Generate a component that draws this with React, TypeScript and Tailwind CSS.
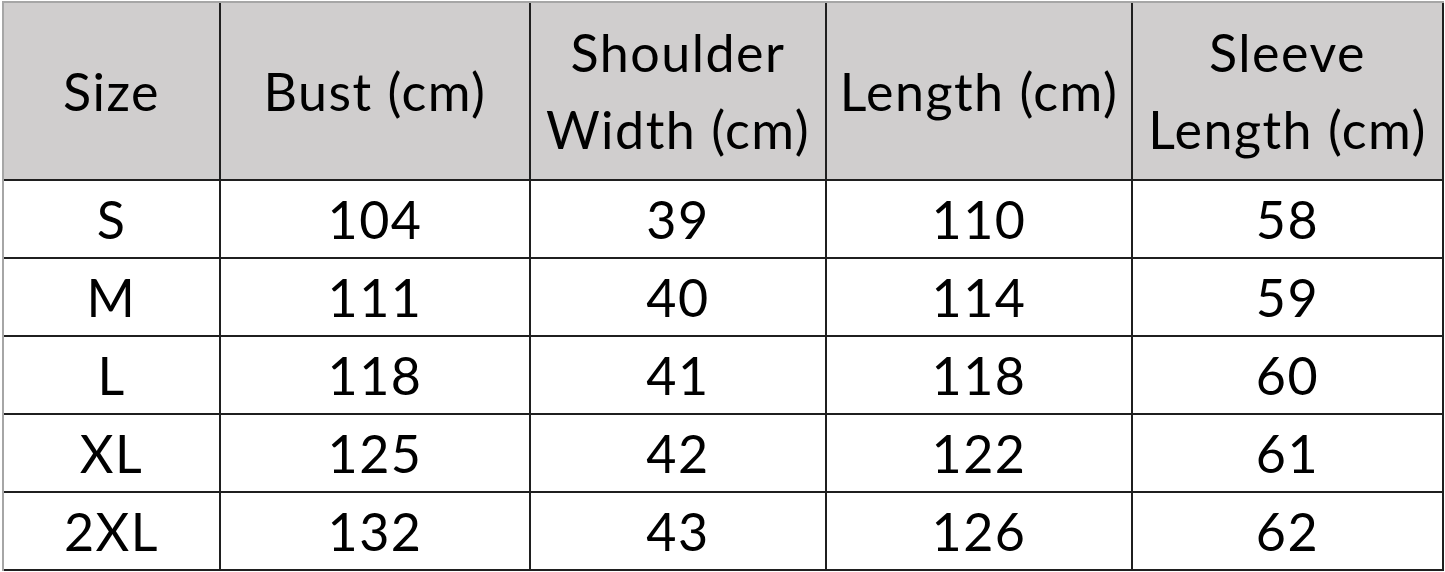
import React from "react";

const headers = ["Size", "Bust (cm)", "Shoulder\nWidth (cm)", "Length (cm)", "Sleeve\nLength (cm)"];
const rows = [
  ["S", "104", "39", "110", "58"],
  ["M", "111", "40", "114", "59"],
  ["L", "118", "41", "118", "60"],
  ["XL", "125", "42", "122", "61"],
  ["2XL", "132", "43", "126", "62"],
];

export default function App() {
  return (
    <div className="w-[1445px] h-[572px] bg-white overflow-hidden" style={{ fontFamily: "Lato, 'Open Sans', sans-serif" }}>
      <div className="ml-[2px] mt-[1px] w-[1442px] border-l-2 border-t-2 border-[#a6a6a6]">
        <div className="grid grid-cols-[217px_310px_296px_306px_311px] text-black text-[52px] leading-[77px] tracking-[1.5px]">
          {headers.map((h, i) => (
            <div
              key={i}
              className="h-[178px] bg-[#d0cece] border-b-2 border-b-[#1f1f1f] border-r-2 border-r-[#1f1f1f] flex flex-col items-center justify-center text-center"
            >
              {h.split("\n").map((l, j) => (
                <div key={j} className="whitespace-nowrap">{l}</div>
              ))}
            </div>
          ))}
          {rows.map((r, ri) =>
            r.map((c, ci) => (
              <div
                key={`${ri}-${ci}`}
                className="h-[78px] border-b-2 border-b-[#1f1f1f] border-r-2 border-r-[#1f1f1f] flex items-center justify-center"
              >
                {c}
              </div>
            ))
          )}
        </div>
      </div>
    </div>
  );
}
